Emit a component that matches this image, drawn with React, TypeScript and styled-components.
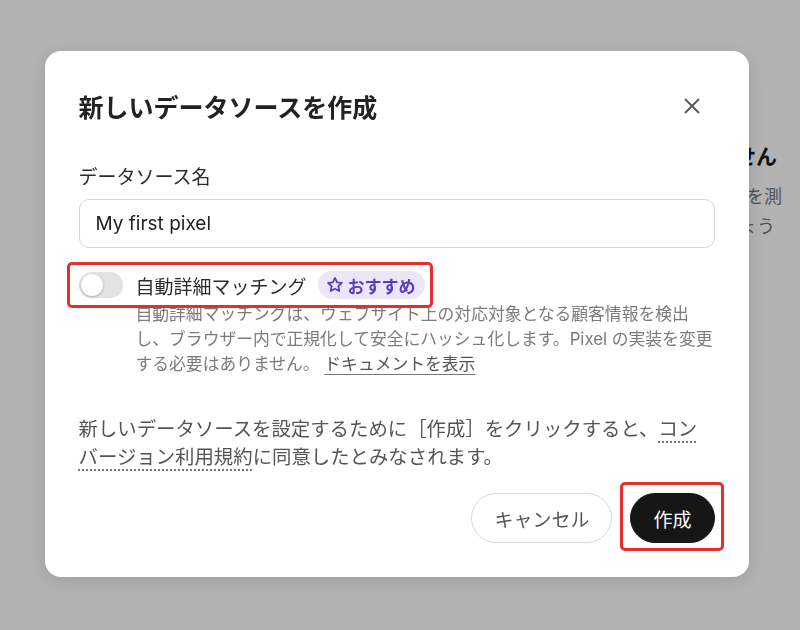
import React from "react";
import styled, { createGlobalStyle } from "styled-components";

const GlobalStyle = createGlobalStyle`
  html, body {
    margin: 0;
    padding: 0;
  }
  body {
    font-family: "Inter", "Noto Sans CJK JP", sans-serif;
    background: #ffffff;
  }
`;

export default function App() {
    return <>
        <GlobalStyle/>
        <Page>
            <EmptyState>
                <EmptyTitle>データソースはまだありません</EmptyTitle>
                <EmptyText $shift={0}>データソースを作成して、ウェブサイトでの成果を測</EmptyText>
                <EmptyText $shift={7}>定しましょう</EmptyText>
            </EmptyState>
        </Page>

        <Overlay>
            <Dialog role="dialog" aria-labelledby="dialog-title">
                <Header>
                    <Title id="dialog-title">新しいデータソースを作成</Title>
                    <CloseButton aria-label="閉じる">
                        <svg width="16" height="16" viewBox="0 0 16 16" fill="none">
                            <path d="M1.5 1.5 L14.5 14.5 M14.5 1.5 L1.5 14.5" stroke="#555" strokeWidth="1.8"
                                  strokeLinecap="round"/>
                        </svg>
                    </CloseButton>
                </Header>

                <FieldLabel htmlFor="source-name">データソース名</FieldLabel>
                <TextInput id="source-name" defaultValue="My first pixel"/>

                <ToggleRow $marked>
                    <Toggle role="switch" aria-checked="false">
                        <Knob/>
                    </Toggle>
                    <ToggleLabel>自動詳細マッチング</ToggleLabel>
                    <Badge>
                        <svg width="18" height="18" viewBox="0 0 24 24" fill="none" stroke="currentColor"
                             strokeWidth="2.4" strokeLinejoin="round">
                            <path
                                d="M12 2.6l2.8 5.9 6.4.78-4.72 4.42 1.22 6.35L12 16.95l-5.7 3.1 1.22-6.35L2.8 9.28l6.4-.78z"/>
                        </svg>
                        おすすめ
                    </Badge>
                </ToggleRow>
                <Description>
                    自動詳細マッチングは、ウェブサイト上の対応対象となる顧客情報を検出<br/>
                    し、ブラウザー内で正規化して安全にハッシュ化します。Pixel の実装を変更<br/>
                    する必要はありません。 <DocLink href="#">ドキュメントを表示</DocLink>
                </Description>

                <Consent>
                    新しいデータソースを設定するために［作成］をクリックすると、<TermsLink>コン<br/>バージョン利用規約</TermsLink>に同意したとみなされます。
                </Consent>

                <Footer>
                    <Button $variant="secondary">キャンセル</Button>
                    <Marked>
                        <Button $variant="primary">作成</Button>
                    </Marked>
                </Footer>
            </Dialog>
        </Overlay>
    </>
}

const Page = styled.div`
  min-height: 100vh;
  background: #ffffff;
`

const EmptyState = styled.div`
  display: flex;
  flex-direction: column;
  align-items: flex-end;
  padding: 142px 18px 0 0;
`

const EmptyTitle = styled.h2`
  margin: 0 5px 10px 0;
  font-size: 21px;
  line-height: 30px;
  font-weight: 700;
  color: #161616;
`

const EmptyText = styled.p<{ $shift: number }>`
  margin: 0 ${p => p.$shift}px 0 0;
  font-size: 18px;
  line-height: 30px;
  color: #767676;
`

const Overlay = styled.div`
  position: fixed;
  inset: 0;
  background: rgba(0, 0, 0, 0.3);
  display: flex;
  align-items: center;
  justify-content: center;
`

const Dialog = styled.div`
  box-sizing: border-box;
  width: 704px;
  height: 526px;
  margin: 0 7px 2px 0;
  padding: 34px;
  background: #ffffff;
  border-radius: 16px;
  box-shadow: 0 4px 18px rgba(0, 0, 0, 0.12);
  display: flex;
  flex-direction: column;
`

const Header = styled.div`
  display: flex;
  align-items: center;
  justify-content: space-between;
  height: 42px;
  margin-bottom: 38px;
`

const Title = styled.h1`
  margin: 0;
  font-size: 25px;
  font-weight: 700;
  color: #222222;
`

const CloseButton = styled.button`
  width: 44px;
  height: 44px;
  margin-right: 1px;
  border: none;
  background: none;
  display: flex;
  align-items: center;
  justify-content: center;
  cursor: pointer;
  padding: 0;
`

const FieldLabel = styled.label`
  font-size: 19px;
  line-height: 26px;
  color: #2b2b2b;
  margin-bottom: 8px;
`

const TextInput = styled.input`
  box-sizing: border-box;
  height: 49px;
  padding: 0 16px;
  border: 1.5px solid #d6d6d6;
  border-radius: 10px;
  font-family: inherit;
  font-size: 19px;
  color: #222222;
  outline: none;
`

const Marked = styled.div`
  position: relative;

  &::after {
    content: "";
    position: absolute;
    inset: -11px -9px -8px -10px;
    border: 3px solid #e3302f;
    border-radius: 5px;
    pointer-events: none;
  }
`

const ToggleRow = styled(Marked)<{ $marked?: boolean }>`
  display: flex;
  align-items: center;
  width: fit-content;
  height: 28px;
  margin-top: 23px;

  &::after {
    inset: -9px -8px -9px -12px;
    display: ${p => p.$marked ? "block" : "none"};
  }
`

const Toggle = styled.div`
  box-sizing: border-box;
  width: 44px;
  height: 26px;
  padding: 2px;
  border-radius: 13px;
  background: #e3e3e3;
  display: flex;
  align-items: center;
`

const Knob = styled.span`
  width: 22px;
  height: 22px;
  border-radius: 50%;
  background: #ffffff;
  box-shadow: 0 1px 3px rgba(0, 0, 0, 0.25);
`

const ToggleLabel = styled.span`
  margin-left: 13px;
  font-size: 19px;
  color: #2b2b2b;
`

const Badge = styled.span`
  display: inline-flex;
  align-items: center;
  gap: 4px;
  height: 28px;
  margin-left: 11px;
  padding: 0 9px 0 8px;
  border-radius: 14px;
  background: #ece6fb;
  color: #5a3cbf;
  font-size: 17px;
  font-weight: 700;
`

const Description = styled.p`
  margin: 3px 0 0 57px;
  font-size: 16.8px;
  line-height: 25px;
  color: #7b7b7b;
  white-space: nowrap;
`

const DocLink = styled.a`
  color: #555555;
  text-decoration: underline;
  text-underline-offset: 4px;
  text-decoration-color: #777777;
`

const Consent = styled.p`
  margin: 38px 0 0;
  font-size: 19.4px;
  line-height: 28px;
  color: #555555;
  white-space: nowrap;
`

const TermsLink = styled.span`
  text-decoration: underline dotted #777777;
  text-decoration-thickness: 2px;
  text-underline-offset: 5px;
`

const Footer = styled.div`
  display: flex;
  justify-content: flex-end;
  align-items: center;
  gap: 18px;
  margin-top: auto;
`

const Button = styled.button<{ $variant: "primary" | "secondary" }>`
  height: 50px;
  padding: 0 22px;
  border-radius: 25px;
  font-family: inherit;
  font-size: 19px;
  cursor: pointer;
  border: 1.5px solid ${p => p.$variant === "primary" ? "#161616" : "#d9d9d9"};
  background: ${p => p.$variant === "primary" ? "#161616" : "#ffffff"};
  color: ${p => p.$variant === "primary" ? "#ffffff" : "#555555"};
`
